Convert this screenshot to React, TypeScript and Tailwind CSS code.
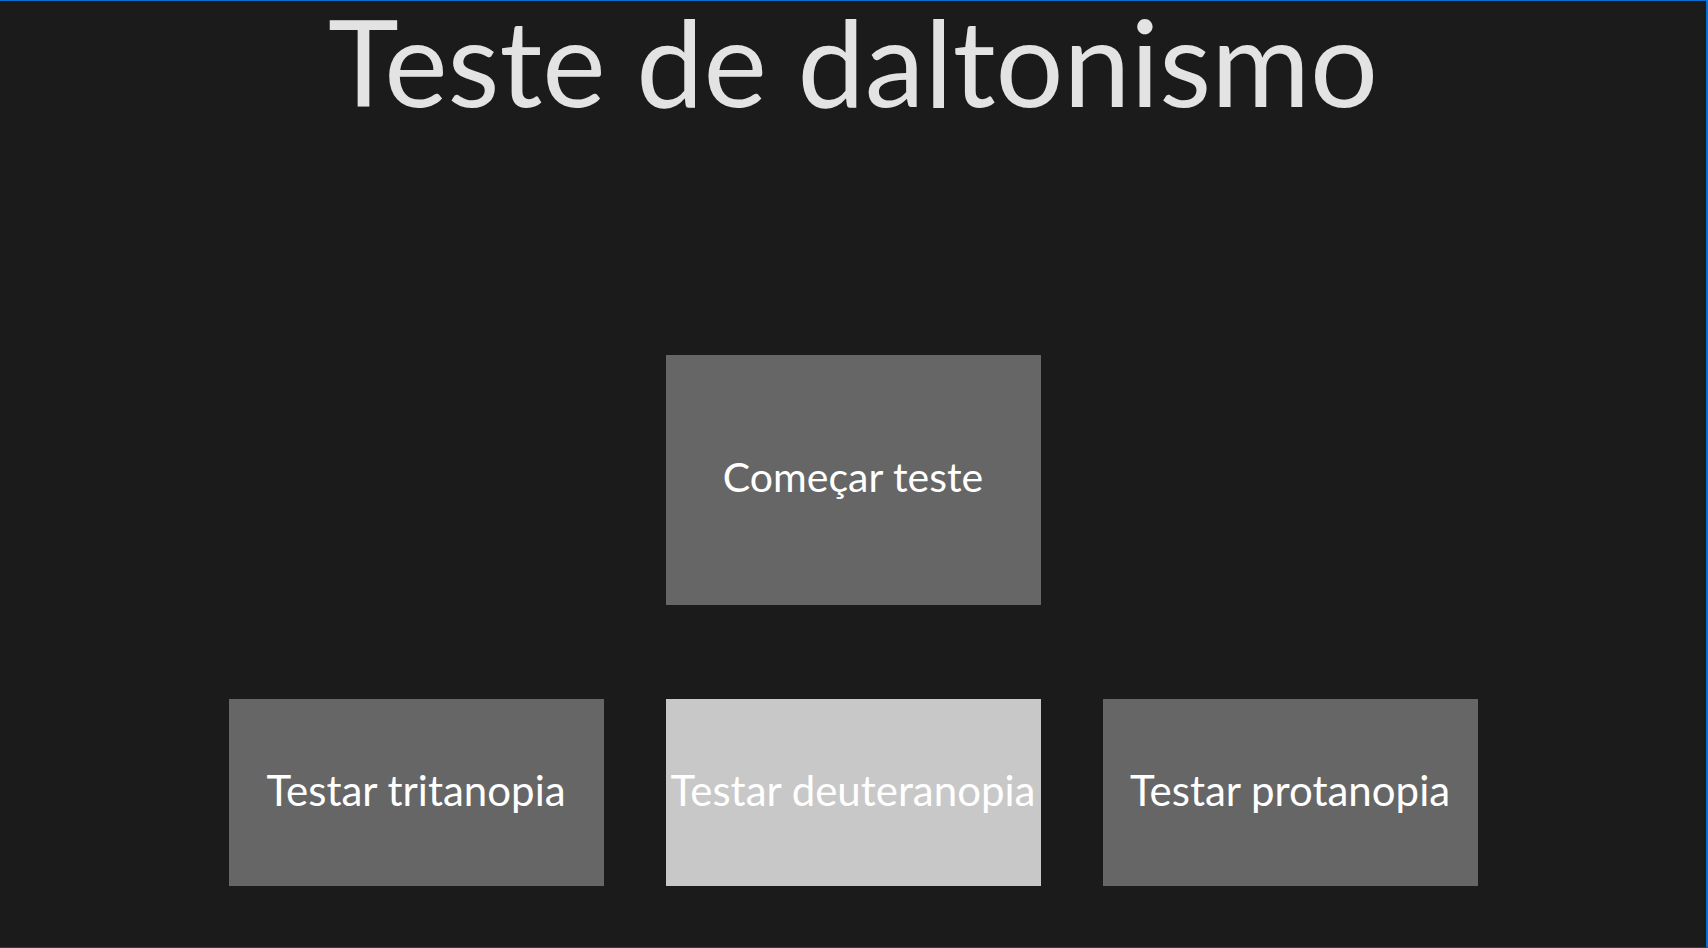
export default function App() {
  const tests = ['Testar tritanopia', 'Testar deuteranopia', 'Testar protanopia'];

  return (
    <div className="h-[948px] w-full overflow-hidden border-t border-r-2 border-b border-t-[#0a6fd1] border-r-[#0a6fd1] border-b-[#3a3a3a] bg-[#1b1b1b] font-['Lato','Noto_Sans',sans-serif] text-white">
      {/* TITLE */}
      <h1 className="text-center text-[120px] leading-none font-normal text-[#e3e3e3]">
        Teste de daltonismo
      </h1>

      {/* START */}
      <div className="mt-[234px] flex justify-center">
        <button className="flex h-[250px] w-[375px] items-center justify-center bg-[#666666] pb-[6px] text-[41px] text-white">
          Começar teste
        </button>
      </div>

      {/* TEST ROW */}
      <div className="mt-[94px] flex justify-center gap-[62px]">
        {tests.map((t, i) => (
          <button
            key={t}
            className={`flex h-[187px] w-[375px] items-center justify-center whitespace-nowrap pb-[4px] text-[42px] text-white ${
              i === 1 ? 'bg-[#c8c8c8]' : 'bg-[#666666]'
            }`}
          >
            {t}
          </button>
        ))}
      </div>
    </div>
  );
}
